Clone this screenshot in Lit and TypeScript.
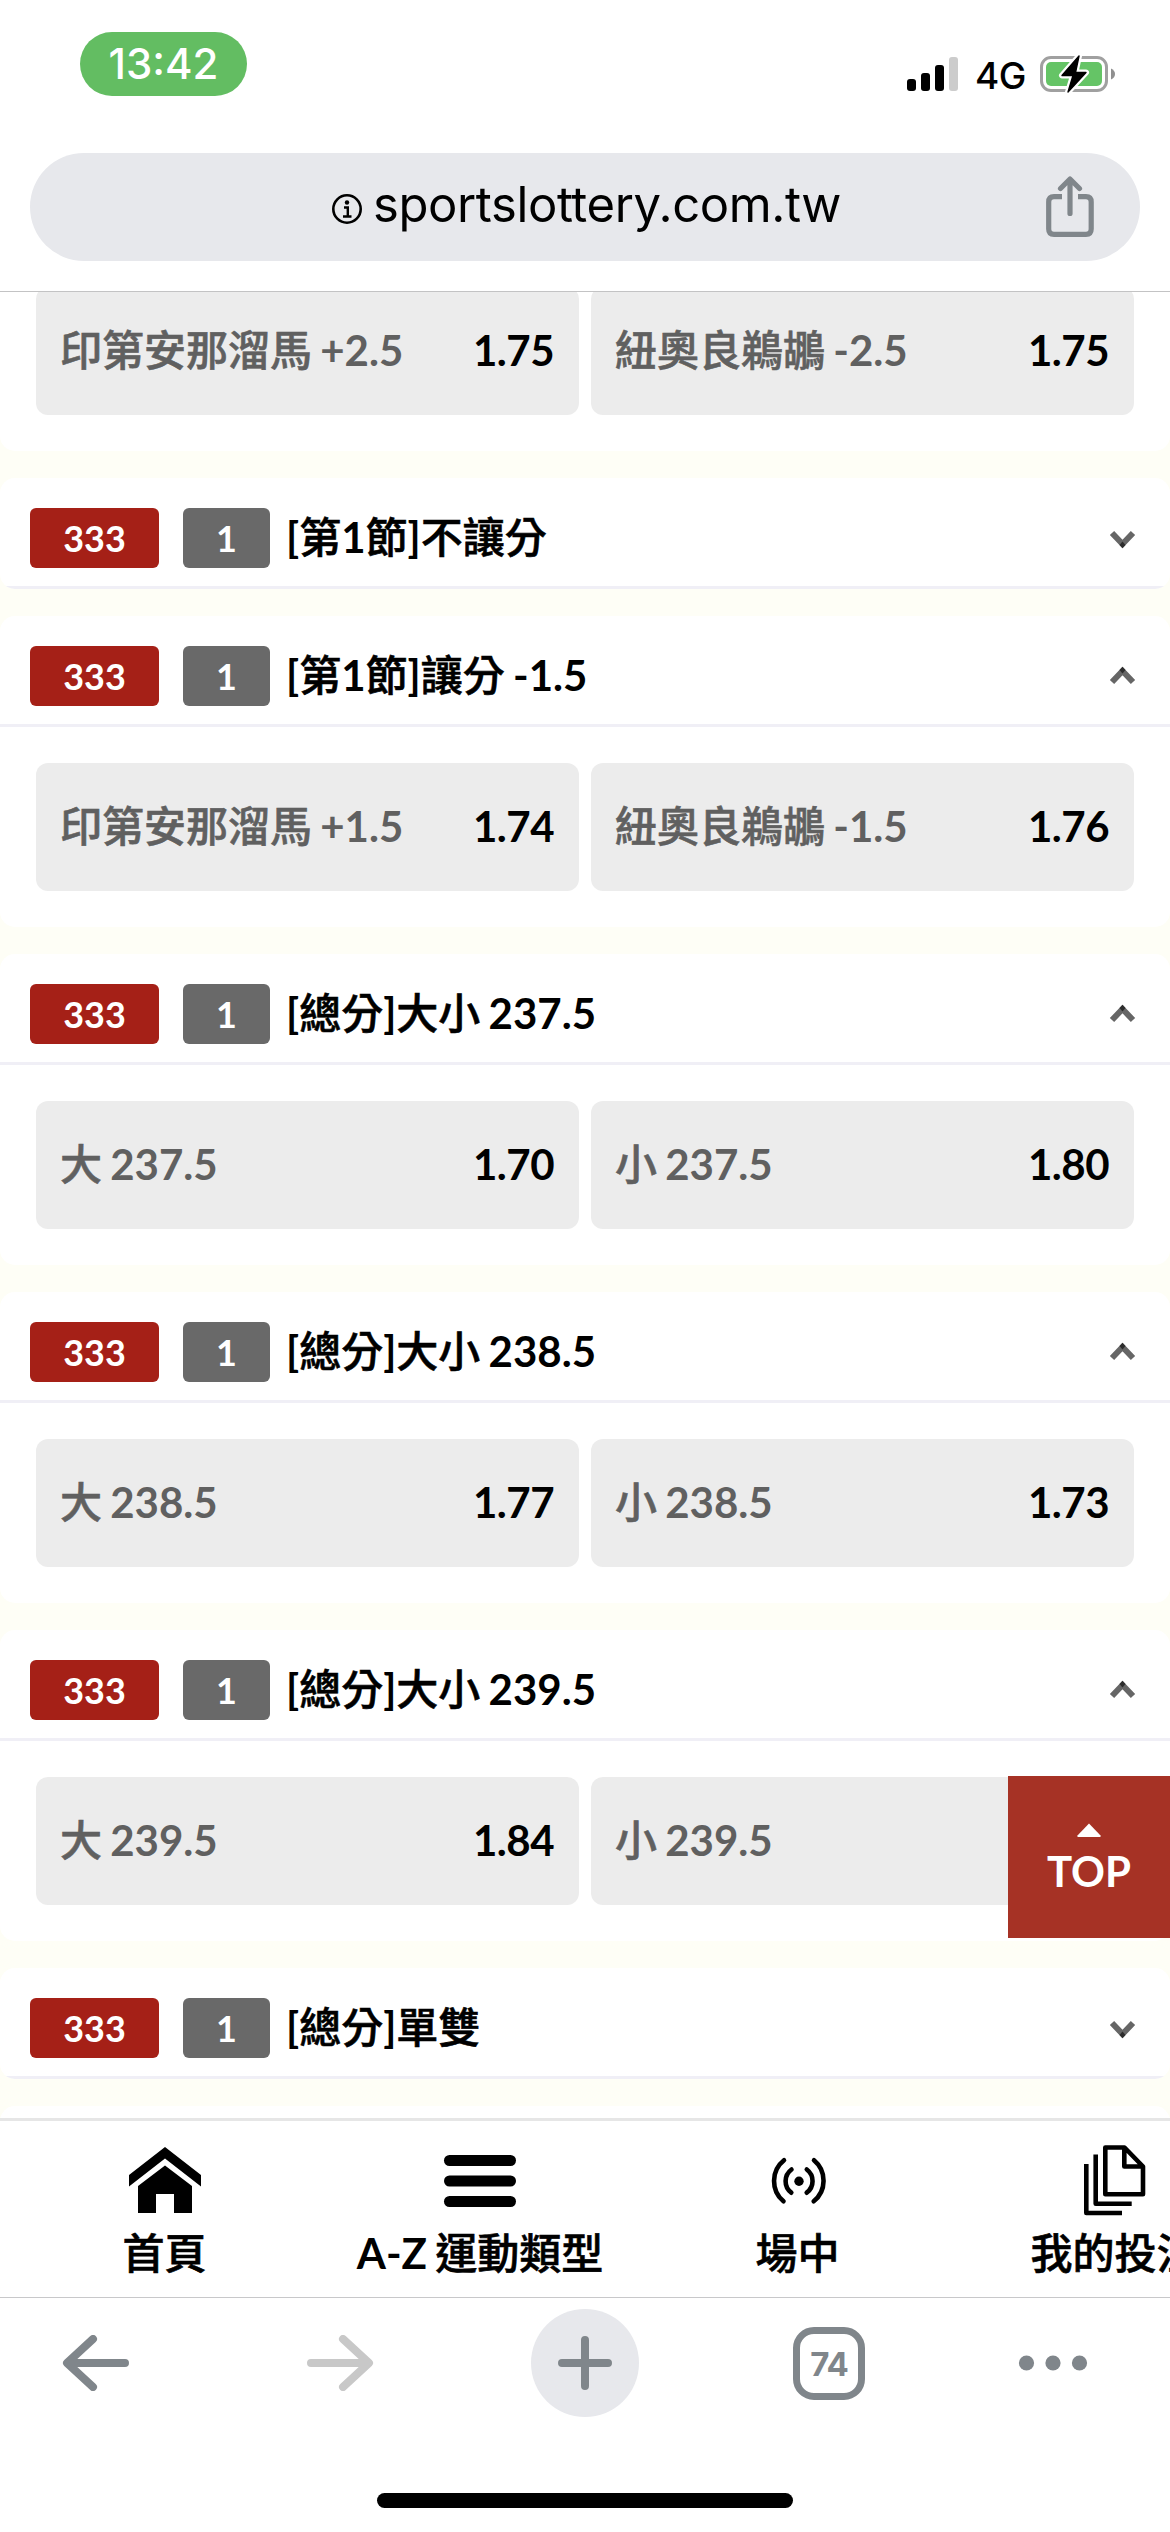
import { LitElement, html, css, svg, nothing } from "lit";
import { customElement, property } from "lit/decorators.js";

interface Pick { name: string; odds: string; }
interface Market { title: string; picks?: Pick[]; }

const markets: Market[] = [
  { title: "[第1節]不讓分" },
  { title: "[第1節]讓分 -1.5", picks: [{ name: "印第安那溜馬 +1.5", odds: "1.74" }, { name: "紐奧良鵜鶘 -1.5", odds: "1.76" }] },
  { title: "[總分]大小 237.5", picks: [{ name: "大 237.5", odds: "1.70" }, { name: "小 237.5", odds: "1.80" }] },
  { title: "[總分]大小 238.5", picks: [{ name: "大 238.5", odds: "1.77" }, { name: "小 238.5", odds: "1.73" }] },
  { title: "[總分]大小 239.5", picks: [{ name: "大 239.5", odds: "1.84" }, { name: "小 239.5", odds: "" }] },
  { title: "[總分]單雙" },
];

// Chinese runs take a lighter weight than the bold Latin around them.
const mixed = (text: string) =>
  text.split(/([\u4e00-\u9fff]+)/).filter(Boolean).map((run) => (/[\u4e00-\u9fff]/.test(run) ? html`<span class="han">${run}</span>` : run));
const han = css`.han { font-weight: 500; -webkit-text-stroke: 0.6px currentColor; }`;

@customElement("pick-row")
class PickRow extends LitElement {
  @property({ attribute: false }) picks: Pick[] = [];
  static styles = [han, css`
    :host { display: grid; grid-template-columns: 543px 543px; column-gap: 12px; padding: 36px; }
    .pick { height: 128px; box-sizing: border-box; border-radius: 12px; background: #ececec; display: flex; justify-content: space-between; align-items: center; padding: 0 25px 3px 24px; line-height: 60px; white-space: pre; word-spacing: -2px; }
    .name { color: #606060; }
    .odds { color: #000; letter-spacing: -0.5px; }
  `];
  render() {
    return this.picks.map((p) => html`<div class="pick"><span class="name">${mixed(p.name)}</span><span class="odds">${p.odds}</span></div>`);
  }
}

@customElement("market-card")
class MarketCard extends LitElement {
  @property({ attribute: false }) market!: Market;
  static styles = [han, css`
    :host { display: block; background: #fff; border-radius: 15px; overflow: hidden; flex: none; }
    .head { height: 111px; box-sizing: border-box; border-bottom: 3px solid #f0eff6; display: flex; align-items: center; padding: 0 34px 0 30px; white-space: pre; word-spacing: -2px; }
    .code, .count { height: 60px; line-height: 61px; border-radius: 6px; color: #fff; font-size: 36px; text-align: center; margin-top: 12px; }
    .code { width: 129px; background: #a52017; }
    .count { width: 87px; margin-left: 24px; background: #696969; }
    .title { flex: 1; margin: 10px 0 0 16px; line-height: 60px; color: #000; }
    .chev { margin-top: 16px; width: 27px; height: 20px; }
    .up { margin-top: 9px; transform: scaleY(-1); }
  `];
  render() {
    const m = this.market;
    return html`
      <div class="head"><span class="code">333</span><span class="count">1</span><span class="title">${mixed(m.title)}</span><svg class="chev ${m.picks ? "up" : ""}" viewBox="0 0 27 20">
          <path d="M3 3 13.5 14 24 3" fill="none" stroke="#666" stroke-width="6"/>
          <path d="M13.500 11.500 16.500 14.900 13.500 18.300 10.500 14.900Z" fill="#2d2d2d"/>
        </svg></div>
      ${m.picks ? html`<pick-row .picks=${m.picks}></pick-row>` : nothing}`;
  }
}

const homeIcon = svg`<path d="M0 28 36 0 72 28V39.500L36 11.500 0 39.500Z"/><path d="M36 18.500 63 39V66H45V47H27V66H9V39Z"/>`;
const menuIcon = svg`<rect y="8" width="72" height="11" rx="5.500"/><rect y="28.500" width="72" height="11" rx="5.500"/><rect y="49" width="72" height="11" rx="5.500"/>`;
const liveIcon = svg`<circle cx="37" cy="34.300" r="4.700"/><g fill="none" stroke="#000" stroke-width="4.600" stroke-linecap="round"><path d="M29.500 22.500A14.500 14.500 0 0 0 29.300 45.700M44.800 22.500A14.500 14.500 0 0 1 44.700 45.700M22 13.300A26.500 26.500 0 0 0 21.500 54.300M52 13.300A26.500 26.500 0 0 1 51.700 54.300"/></g>`;
const betsIcon = svg`<g fill="none" stroke="#000" stroke-width="4.600" stroke-linejoin="round"><path d="M26.300 .5H45.500L64 19.500V47.300H26.300ZM45.300 1V19.500H64M16.700 7.500V56.700H52.700M7.300 17V66H43"/></g>`;

@customElement("app-root")
class AppRoot extends LitElement {
  static styles = [han, css`
    :host { display: block; }
    .screen { position: relative; width: 1170px; height: 2532px; overflow: hidden; background: #fff; display: flex; flex-direction: column; font-family: Lato, "Noto Sans CJK TC", sans-serif; font-size: 42px; font-weight: 700; }
    .sys { font-family: Inter, "Liberation Sans", sans-serif; font-weight: 400; }
    .status { height: 153px; box-sizing: border-box; padding: 32px 54px 0 80px; display: flex; justify-content: space-between; flex: none; }
    .time { width: 167px; height: 64px; line-height: 64px; border-radius: 32px; background: #63bd62; color: #fff; font-size: 42px; font-weight: 500; text-align: center; }
    .right { display: flex; height: 64px; margin-top: 10px; align-items: center; }
    .right svg { display: block; }
    .net { font-size: 37px; font-weight: 500; width: 65px; margin-left: 16px; line-height: 60px; margin-top: 3px; letter-spacing: -0.5px; }
    .url { height: 108px; margin: 0 30px; flex: none; border-radius: 54px; background: #e7e8ec; display: flex; align-items: center; }
    .url .info { margin: 3px 0 0 301px; width: 32px; height: 32px; }
    .host { margin-left: 10px; width: 672px; font-size: 49px; letter-spacing: -0.4px; line-height: 60px; margin-top: -4px; }
    .share { width: 50px; height: 62px; }
    .list { height: 1827px; margin-top: 30px; border-top: 1px solid #c3c3c4; box-sizing: border-box; overflow: hidden; flex: none; background: #fefef6; display: flex; flex-direction: column; gap: 27px; }
    .first { background: #fff; border-radius: 0 0 15px 15px; margin-top: -41px; flex: none; }
    .tail { height: 60px; background: #fff; border-radius: 15px; flex: none; }
    .nav { height: 179px; box-sizing: border-box; border-top: 3px solid #e6e6e6; flex: none; display: grid; grid-template-columns: 329px 302px 333px 301px; overflow: hidden; }
    .tab { display: flex; flex-direction: column; align-items: center; padding-top: 26px; white-space: pre; word-spacing: -2px; color: #000; }
    .tab svg { width: 72px; height: 74px; overflow: visible; display: block; }
    .label { line-height: 60px; margin-top: 2px; }
    .bar { border-top: 1px solid #c8c8ca; height: 235px; box-sizing: border-box; flex: none; }
    .tools { height: 130px; display: grid; grid-template-columns: 191px 298px 192px 296px 151px; align-items: center; justify-items: center; color: #80868b; }
    .plus { width: 108px; height: 108px; border-radius: 50%; background: #e7e8ec; display: grid; place-items: center; }
    .tabs { width: 72px; height: 73px; box-sizing: border-box; border: 7px solid #80868b; border-radius: 21px; font-size: 33px; font-weight: 700; line-height: 60px; text-align: center; letter-spacing: -1px; }
    .grip { width: 416px; height: 15px; border-radius: 8px; background: #000; margin: 65px auto 0; }
    .top { position: absolute; left: 1008px; top: 1776px; width: 162px; height: 162px; background: #a63225; color: #fff; display: flex; flex-direction: column; align-items: center; }
    .top svg { margin-top: 47px; width: 24px; height: 14px; }
    .top span { line-height: 60px; margin-top: 4px; }
  `];
  render() {
    const tab = (icon: unknown, label: string) => html`<div class="tab"><svg viewBox="0 0 72 74">${icon}</svg><span class="label">${mixed(label)}</span></div>`;
    return html`<div class="screen">
      <div class="status sys">
        <div class="time">13:42</div>
        <div class="right">
          <svg width="52" height="36" viewBox="0 0 52 36"><rect y="23" width="9" height="12" rx="3"/><rect x="14" y="17" width="9" height="18" rx="3"/><rect x="28" y="9" width="9" height="26" rx="3"/><rect x="42" y="1" width="9" height="34" rx="3" fill="#ccc"/></svg>
          <span class="net">4G</span>
          <svg width="76" height="42" viewBox="0 0 76 42">
            <rect x="1.500" y="4.500" width="65" height="33" rx="9.500" fill="none" stroke="#a0a0a0" stroke-width="3"/>
            <rect x="6" y="9" width="56" height="24" rx="5" fill="#65c466"/><path d="M71 15.500q4 2 4 5.500t-4 5.500z" fill="#909090"/>
            <path d="M39 3 22 22.500H33L28 39 46 19.500H35.500Z" fill="#000" stroke="#fff" stroke-width="6" stroke-linejoin="round" paint-order="stroke"/>
            <path d="M39 3 22 22.500H33L28 39 46 19.500H35.500Z" stroke="#000" stroke-width="1.400" stroke-linejoin="round"/>
          </svg>
        </div>
      </div>
      <div class="url sys">
        <svg class="info" viewBox="0 0 32 32"><circle cx="16" cy="16" r="13.700" fill="none" stroke="#000" stroke-width="2.600"/><circle cx="16" cy="9.500" r="2.200"/><path d="M13 14.500H16.800V23M12 23.500H20.500" fill="none" stroke="#000" stroke-width="2.400"/></svg>
        <span class="host">sportslottery.com.tw</span>
        <svg class="share" viewBox="0 0 50 62"><g fill="none" stroke="#80868b" stroke-width="5.200" stroke-linecap="round" stroke-linejoin="round"><path d="M17 20.600H9Q3.700 20.600 3.700 26V53Q3.700 58.300 9 58.300H41Q46.200 58.300 46.200 53V26Q46.200 20.600 41 20.600H33" stroke-linecap="butt"/><path d="M25 37.500V4M15.500 12.500 25 3 34.500 12.500"/></g></svg>
      </div>
      <div class="list">
        <div class="first"><pick-row .picks=${[{ name: "印第安那溜馬 +2.5", odds: "1.75" }, { name: "紐奧良鵜鶘 -2.5", odds: "1.75" }]}></pick-row></div>
        ${markets.map((m) => html`<market-card .market=${m}></market-card>`)}
        <div class="tail"></div>
      </div>
      <div class="nav">${tab(homeIcon, "首頁")}${tab(menuIcon, "A-Z 運動類型")}${tab(liveIcon, "場中")}${tab(betsIcon, "我的投注")}</div>
      <div class="bar">
        <div class="tools">
          <svg width="68" height="56" viewBox="0 0 68 56"><path d="M63 28H6M31 4 5 28 31 52" fill="none" stroke="#80868b" stroke-width="8" stroke-linecap="round" stroke-linejoin="round"/></svg>
          <svg width="68" height="56" viewBox="0 0 68 56"><path d="M5 28H62M37 4 63 28 37 52" fill="none" stroke="#c8c8c8" stroke-width="8" stroke-linecap="round" stroke-linejoin="round"/></svg>
          <div class="plus"><svg width="54" height="54" viewBox="0 0 54 54"><path d="M27 4V50M4 27H50" stroke="#80868b" stroke-width="8" stroke-linecap="round"/></svg></div>
          <div class="tabs sys">74</div>
          <svg width="70" height="16" viewBox="0 0 70 16" fill="#80868b"><circle cx="8.500" cy="8" r="7.600"/><circle cx="35" cy="8" r="7.600"/><circle cx="61.500" cy="8" r="7.600"/></svg>
        </div>
        <div class="grip"></div>
      </div>
      <div class="top"><svg viewBox="0 0 24 14"><path d="M12 .500 24 13 23 14H1L0 13Z" fill="#fff"/></svg><span>TOP</span></div>
    </div>`;
  }
}
